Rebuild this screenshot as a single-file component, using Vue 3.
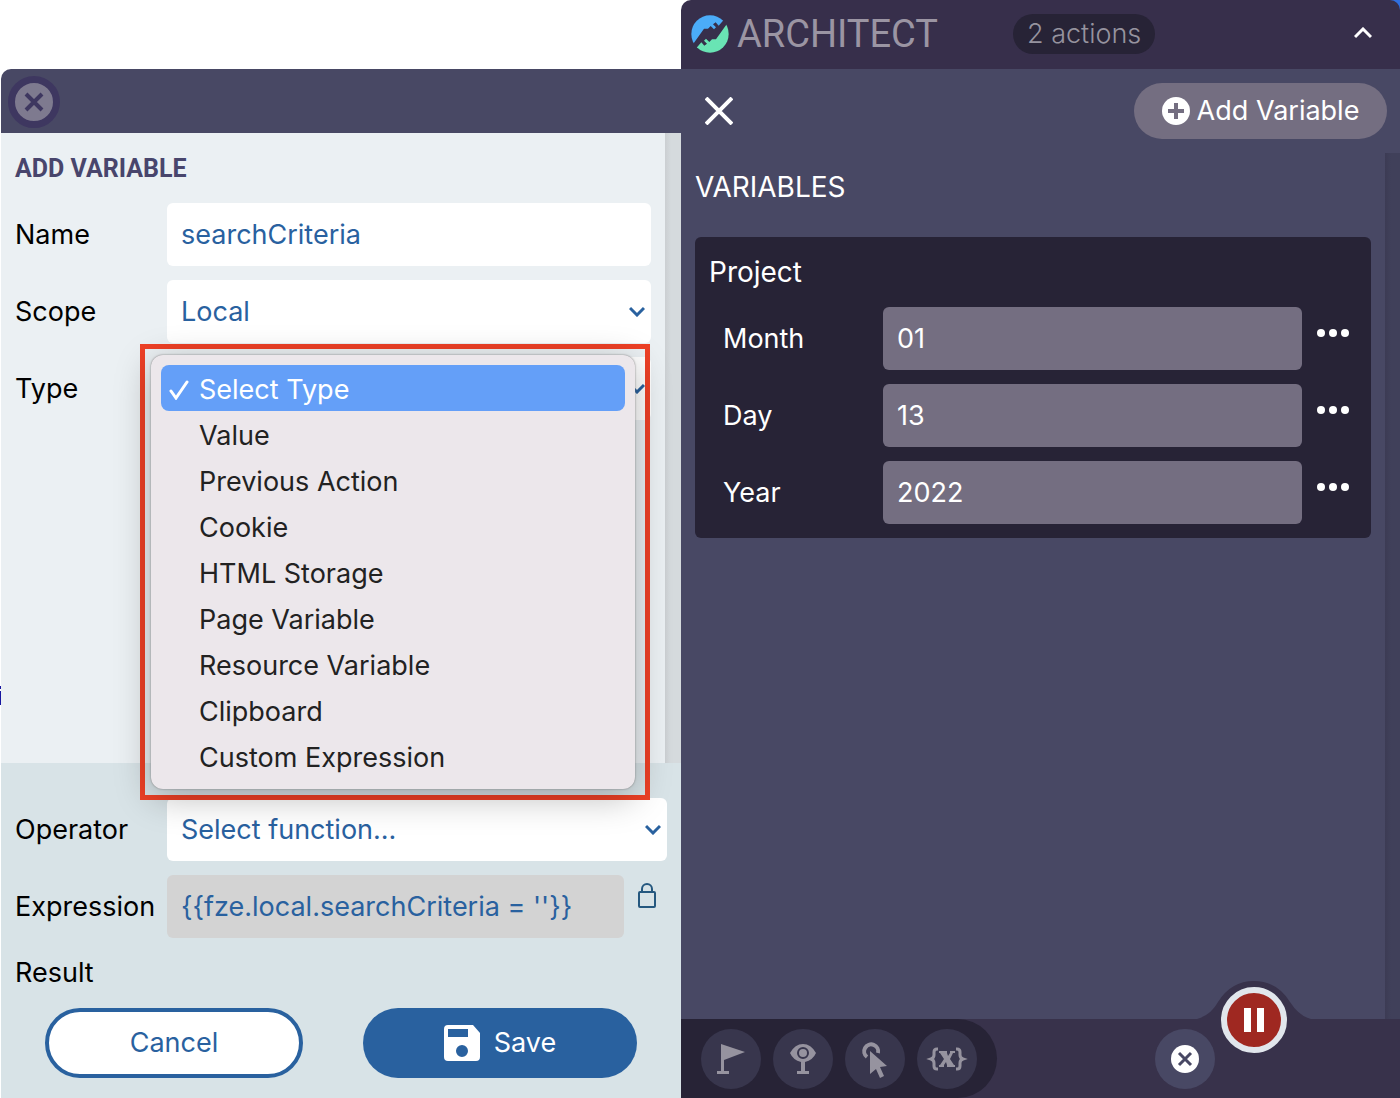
<script setup>
import { ref } from 'vue'

const name = ref('searchCriteria')
const expression = ref("{{fze.local.searchCriteria = ''}}")
const types = [
  'Select Type', 'Value', 'Previous Action', 'Cookie', 'HTML Storage',
  'Page Variable', 'Resource Variable', 'Clipboard', 'Custom Expression',
]
const selectedType = ref('Select Type')
const variables = ref([
  { label: 'Month', value: '01' },
  { label: 'Day', value: '13' },
  { label: 'Year', value: '2022' },
])
</script>

<template>
  <div class="workspace">
    <section class="editor">
      <header class="editor-bar">
        <button class="editor-close" aria-label="Close">
          <svg width="20" height="20" viewBox="0 0 20 20"><path d="M2 2l16 16M18 2L2 18" fill="none" stroke="#3e3760" stroke-width="4" /></svg>
        </button>
      </header>
      <div class="editor-scroll">
        <div class="fields">
          <h2>ADD VARIABLE</h2>
          <div class="field">
            <label for="var-name">Name</label>
            <input id="var-name" v-model="name" class="control" type="text" />
          </div>
          <div class="field">
            <label for="var-scope">Scope</label>
            <div class="picker">
              <select id="var-scope" class="control"><option>Local</option></select>
              <svg class="chevron" width="16" height="11" viewBox="0 0 16 11"><path d="M1 2l7 7 7-7" /></svg>
            </div>
          </div>
          <div class="field">
            <label for="var-type">Type</label>
            <div class="picker">
              <select id="var-type" v-model="selectedType" class="control">
                <option v-for="t in types" :key="t">{{ t }}</option>
              </select>
              <svg class="chevron" width="16" height="11" viewBox="0 0 16 11"><path d="M1 2l7 7 7-7" /></svg>
              <div class="highlight">
                <ul class="menu" role="listbox" aria-label="Type">
                  <li v-for="t in types" :key="t" role="option" :aria-selected="t === selectedType" :class="{ active: t === selectedType }" @click="selectedType = t">
                    <svg v-if="t === selectedType" class="tick" width="20" height="20" viewBox="0 0 20 20"><path d="M2 11l5 7L18 2" /></svg>
                    {{ t }}
                  </li>
                </ul>
              </div>
            </div>
          </div>
        </div>
        <div class="track"></div>
      </div>
      <div class="summary">
        <div class="field">
          <label for="var-operator">Operator</label>
          <div class="picker">
            <select id="var-operator" class="control"><option>Select function...</option></select>
            <svg class="chevron" width="16" height="11" viewBox="0 0 16 11"><path d="M1 2l7 7 7-7" /></svg>
          </div>
        </div>
        <div class="field">
          <label for="var-expression">Expression</label>
          <input id="var-expression" v-model="expression" class="control locked" type="text" readonly />
          <button class="lock" aria-label="Unlock expression">
            <svg width="20" height="25" viewBox="0 0 20 25" fill="none" stroke="#25587f" stroke-width="2"><rect x="2" y="9" width="16" height="15" rx="1" /><path d="M5 9V6a5 5 0 0 1 10 0v3" /></svg>
          </button>
        </div>
        <div class="result">Result</div>
        <div class="actions">
          <button class="pill cancel">Cancel</button>
          <button class="pill save">
            <svg width="36" height="36" viewBox="0 0 36 36"><path fill="#fff" fill-rule="evenodd" d="M4 0h25l7 8v24a4 4 0 0 1-4 4H4a4 4 0 0 1-4-4V4a4 4 0 0 1 4-4zM4 4v8h20V4zM18 20a6 6 0 1 0 0 12 6 6 0 0 0 0-12z" /></svg>
            Save
          </button>
        </div>
      </div>
    </section>

    <section class="architect">
      <div class="corner">
        <header class="brand-bar">
          <svg class="logo" width="38" height="38" viewBox="8 9 114 114">
            <clipPath id="disc"><circle cx="65" cy="66" r="56" /></clipPath>
            <g clip-path="url(#disc)">
              <path fill="#4bacf8" d="M0 0H106V24L91 41L82 31L74 37L83 46L77 52L67 42L59 50H47L15 95H0z" />
              <path fill="#69e4b4" transform="rotate(180 65 66)" d="M0 0H106V24L91 41L82 31L74 37L83 46L77 52L67 42L59 50H47L15 95H0z" />
            </g>
          </svg>
          <h1>ARCHITECT</h1>
          <span class="count">2 actions</span>
          <button class="collapse" aria-label="Collapse">
            <svg width="18" height="14" viewBox="0 0 18 14"><path d="M1 10l8-8 8 8" fill="none" stroke="#fff" stroke-width="3" /></svg>
          </button>
        </header>
      </div>
      <div class="tools">
        <button class="dismiss" aria-label="Close variables">
          <svg width="28" height="28" viewBox="0 0 28 28"><path d="M1 1l26 26M27 1L1 27" fill="none" stroke="#fff" stroke-width="4" /></svg>
        </button>
        <button class="add">
          <svg width="28" height="28" viewBox="0 0 28 28"><circle cx="14" cy="14" r="14" fill="#fff" /><path d="M14 6v16M6 14h16" stroke="#746e81" stroke-width="4" /></svg>
          Add Variable
        </button>
      </div>
      <main class="board">
        <div class="variables">
          <h2>VARIABLES</h2>
          <div class="card">
            <h3>Project</h3>
            <div v-for="v in variables" :key="v.label" class="variable">
              <label :for="'v-' + v.label">{{ v.label }}</label>
              <input :id="'v-' + v.label" v-model="v.value" type="text" />
              <button class="more" :aria-label="v.label + ' options'">
                <svg width="32" height="8" viewBox="0 0 32 8" fill="#fff"><circle cx="4" cy="4" r="4" /><circle cx="16" cy="4" r="4" /><circle cx="28" cy="4" r="4" /></svg>
              </button>
            </div>
          </div>
        </div>
        <div class="track dark"></div>
      </main>
      <footer class="dock">
        <nav class="steps">
          <button class="round" aria-label="Navigate">
            <svg width="60" height="60" viewBox="0 0 60 60" fill="#96939f"><path d="M20 15L44 23L23 31V42H28V45H16V42H20z" /></svg>
          </button>
          <button class="round" aria-label="Inspect">
            <svg width="60" height="60" viewBox="0 0 60 60"><path fill="#96939f" d="M17 24Q22 15 30 15T43 24Q40 31 32 33V42H36V45H24V42H28V33Q20 31 17 24z" /><circle cx="30" cy="24" r="5" fill="#96939f" stroke="#38364d" stroke-width="2" /></svg>
          </button>
          <button class="round" aria-label="Interact">
            <svg width="60" height="60" viewBox="0 0 60 60"><path d="M22 28A7 7 0 1 1 33 24" fill="none" stroke="#96939f" stroke-width="4" /><path fill="#96939f" d="M25 22L42 37L35 38L39 47L35 49L31 40L25 45z" /></svg>
          </button>
          <button class="round" aria-label="Variables">
            <svg width="60" height="60" viewBox="0 0 60 60" fill="none" stroke="#96939f"><path stroke-width="3" d="M21 20H20Q17 20 17 23V26Q17 29 14 30Q17 31 17 34V37Q17 40 20 40H21M39 20H40Q43 20 43 23V26Q43 29 46 30Q43 31 43 34V37Q43 40 40 40H39" /><path fill="#96939f" stroke="none" d="M22 22H30V24L31 27L33 24V22H38V24H36L33 30L37 36H38V38H30V36L29 33L27 36V38H22V36H23L27 30L23 24H22z" /></svg>
          </button>
        </nav>
        <button class="round stop" aria-label="Cancel recording">
          <svg width="28" height="28" viewBox="0 0 28 28"><circle cx="14" cy="14" r="14" fill="#fff" /><path d="M8 8l12 12M20 8L8 20" stroke="#484864" stroke-width="3" /></svg>
        </button>
        <div class="recorder">
          <svg class="hump" width="114" height="38" viewBox="0 0 114 38"><path fill="#38324b" d="M0 38Q14 34 21 21Q34 0 57 0T93 21Q102 35 114 38z" /></svg>
          <button class="pause" aria-label="Pause">
            <svg width="20" height="24" viewBox="0 0 20 24" fill="#fff"><path d="M0 0h7v24H0zM13 0h7v24h-7z" /></svg>
          </button>
        </div>
      </footer>
    </section>
  </div>
</template>

<style>
body { margin: 0; background: #fff; }
</style>

<style scoped>
* { box-sizing: border-box; }
button { border: 0; padding: 0; background: none; font: inherit; color: inherit; display: flex; align-items: center; justify-content: center; }
h1, h2, h3, ul { margin: 0; padding: 0; }
.workspace {
  display: flex;
  min-height: 100vh;
  padding-left: 1px;
  background: linear-gradient(#1616a0, #1616a0) 0 691px / 1px 14px no-repeat, linear-gradient(#1616a0, #1616a0) 0 686px / 1px 3px no-repeat, #fff;
  font-family: Inter, Roboto, sans-serif;
  font-size: 27px;
  line-height: 32px;
}
.editor { flex: 680; min-width: 0; margin-top: 69px; display: flex; flex-direction: column; color: #000; }
.editor-bar { height: 64px; padding: 7px; background: #484864; border-top-left-radius: 10px; }
.editor-close { width: 52px; height: 52px; border: 7px solid #3e3760; border-radius: 50%; background: #7e7a8f; }
.editor-scroll { flex: 1; display: flex; background: #ebf0f3; }
.fields { flex: 1; min-width: 0; padding: 20px 14px; display: flex; flex-direction: column; gap: 14px; }
.fields h2 { font-size: 25px; font-weight: 700; color: #48456c; margin-bottom: 4px; font-family: Roboto, sans-serif; }
.track { width: 16px; background: linear-gradient(to right, #cbcfd2, #d5dadd 6px); }
.field { display: flex; }
.field label { width: 152px; line-height: 63px; }
.picker { position: relative; flex: 1; }
.control { flex: 1; width: 100%; min-width: 0; height: 63px; padding: 0 14px; border: 0; border-radius: 6px; background: #fff; color: #29619f; font: inherit; appearance: none; }
.chevron { position: absolute; right: 6px; top: 26px; fill: none; stroke: #29619f; stroke-width: 3; }
.highlight { position: absolute; z-index: 2; top: -13px; left: -27px; right: 1px; padding: 6px 10px 6px 6px; border: 5px solid #ee4026; }
.menu { list-style: none; padding: 10px; border-radius: 12px; background: #ece7eb; color: #222; box-shadow: 0 0 2px #777, 0 8px 36px rgba(0, 0, 0, 0.28); }
.menu li { position: relative; height: 46px; padding-left: 38px; line-height: 50px; border-radius: 8px; }
.menu li.active { background: #649ff8; color: #fff; }
.tick { position: absolute; left: 8px; top: 15px; fill: none; stroke: #fff; stroke-width: 3; stroke-linecap: round; }
.summary { padding: 35px 14px 20px; display: flex; flex-direction: column; gap: 14px; background: #d8e3e7; }
.locked { background: #d3d3d3; }
.lock { align-self: flex-start; margin: 8px 10px 0 13px; }
.result { line-height: 42px; }
.actions { display: flex; gap: 60px; padding: 0 30px; }
.pill { height: 70px; border-radius: 35px; }
.cancel { flex: 1 1 258px; border: 4px solid #29619f; background: #fff; color: #29619f; }
.save { flex: 1 1 274px; gap: 14px; background: #29619f; color: #fff; }

.architect { flex: 719; min-width: 0; display: flex; flex-direction: column; background: #484864; color: #fff; }
.corner { background: linear-gradient(to left, #2f6fe0 20px, #fff 20px); }
.brand-bar { display: flex; align-items: center; height: 69px; padding: 0 28px 2px 10px; background: #372f4b; border-radius: 10px 10px 0 0; }
.brand-bar h1 { margin-left: 8px; font-family: Roboto, sans-serif; font-size: 38px; font-weight: 400; line-height: 48px; color: #9b95a3; }
.count { margin-left: 75px; padding: 0 14px; border-radius: 20px; background: #272336; color: #96939f; line-height: 40px; font-weight: 300; }
.collapse { margin-left: auto; }
.tools { display: flex; align-items: center; justify-content: space-between; height: 84px; padding: 0 13px 0 24px; }
.add { width: 253px; height: 56px; gap: 7px; border-radius: 28px; background: #746e81; }
.board { flex: 1; display: flex; }
.variables { flex: 1; min-width: 0; padding: 18px 14px; }
.variables h2 { font-size: 28px; font-weight: 400; margin-bottom: 34px; }
.card { display: flex; flex-direction: column; gap: 14px; padding: 14px; border-radius: 6px; background: #272336; }
.card h3 { font-size: 28px; font-weight: 400; line-height: 42px; }
.variable { display: flex; padding-left: 14px; }
.variable label { width: 160px; line-height: 63px; }
.variable input { flex: 1; min-width: 0; height: 63px; padding: 0 14px; border: 0; border-radius: 6px; background: #746e81; color: #fff; font: inherit; }
.more { align-self: flex-start; margin: 22px 8px 0 15px; }
.track.dark { width: 15px; background: linear-gradient(to right, #3c3b54, #40405a 6px); }
.dock { position: relative; display: flex; align-items: center; justify-content: space-between; height: 79px; padding-right: 185px; background: #38324b; }
.steps { display: flex; align-items: center; gap: 12px; height: 79px; padding: 0 20px; border-radius: 0 40px 40px 0; background: #272336; }
.round { width: 60px; height: 60px; border-radius: 50%; background: #38364d; }
.stop { background: #484864; }
.recorder { position: absolute; right: 89px; top: -38px; width: 114px; display: flex; justify-content: center; padding-top: 6px; }
.hump { position: absolute; top: 0; left: 0; }
.pause { position: relative; width: 66px; height: 66px; border: 6px solid #e1e6ec; border-radius: 50%; background: #9f2821; }
</style>
